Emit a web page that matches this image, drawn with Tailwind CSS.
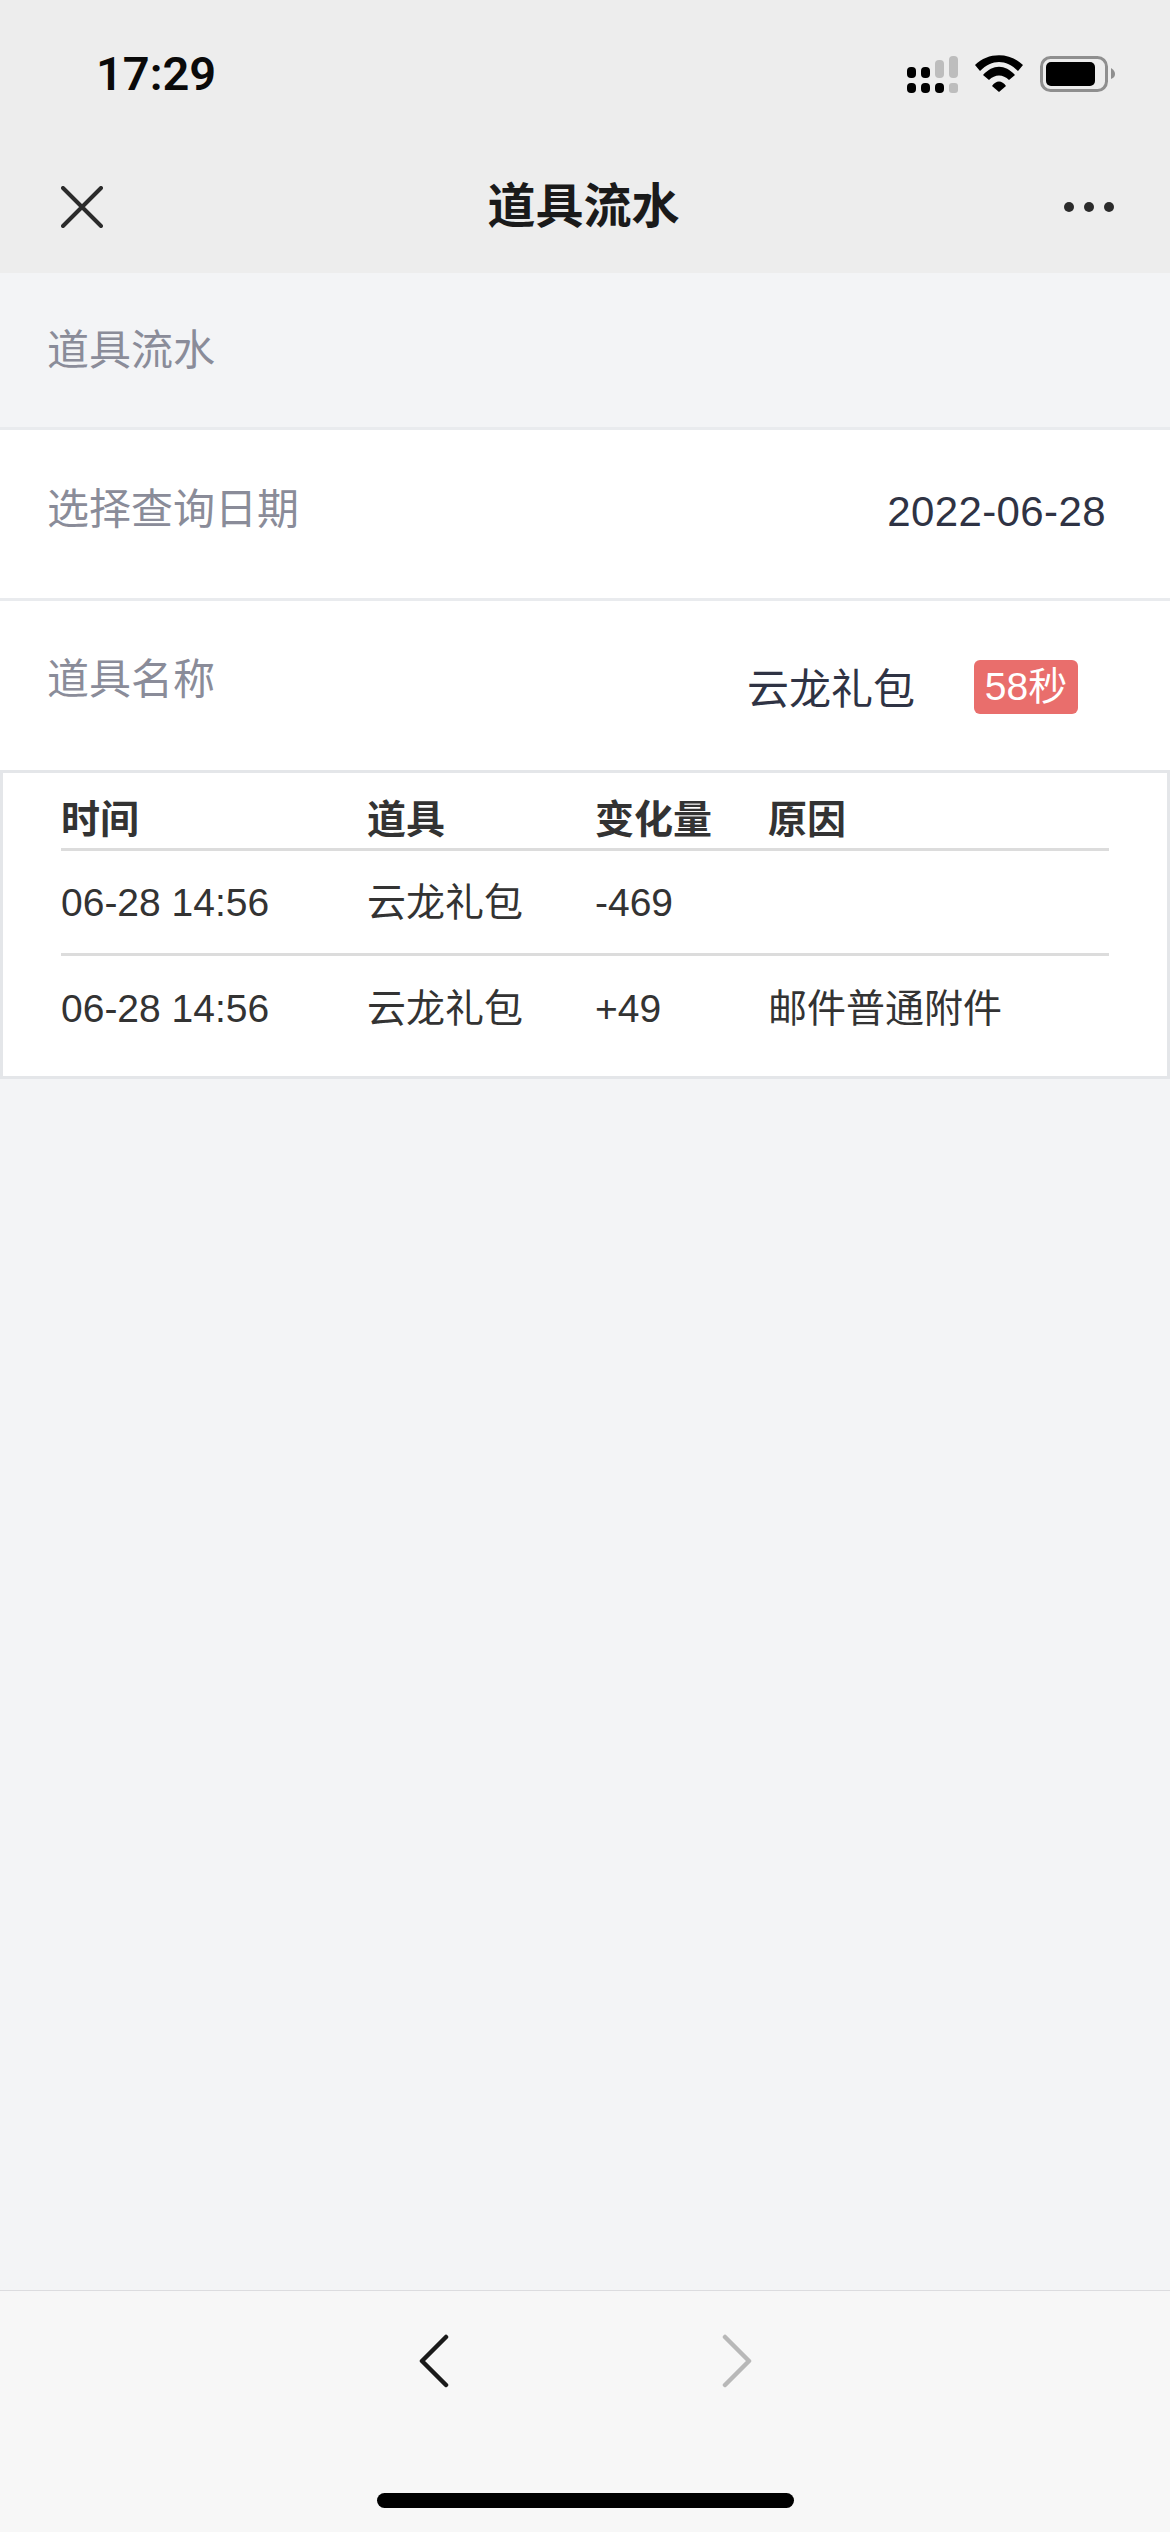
<!DOCTYPE html>
<html lang="zh-CN">
<head>
    <meta charset="UTF-8">
    <meta name="viewport" content="width=device-width, initial-scale=1.0">
    <title>道具流水</title>
    <script src="https://cdn.jsdelivr.net/npm/@tailwindcss/browser@4"></script>
</head>
<body class="flex flex-col h-[2532px] w-[1170px] overflow-hidden bg-[#f3f4f6] font-['Liberation_Sans','Noto_Sans_CJK_SC',sans-serif]">
    <header class="bg-[#ededed] h-[273px] shrink-0">
        <div class="h-[148px] flex items-center justify-between pl-[96px] pr-[55px]">
            <span class="text-[47px] font-semibold text-[#0a0a0a] font-['Roboto',sans-serif]">17:29</span>
            <svg width="208" height="38" viewBox="907 55 208 38">
                <g fill="#000">
                    <rect x="907" y="67" width="9" height="11" rx="4"/>
                    <rect x="921" y="67" width="9" height="11" rx="4"/>
                    <rect x="907" y="83" width="9" height="10" rx="4"/>
                    <rect x="921" y="83" width="9" height="10" rx="4"/>
                    <rect x="935" y="83" width="9" height="10" rx="4"/>
                </g>
                <g fill="#bdbdbd">
                    <rect x="935" y="60" width="9" height="18" rx="4"/>
                    <rect x="949" y="56" width="9" height="22" rx="4"/>
                    <rect x="949" y="83" width="9" height="10" rx="3"/>
                </g>
                <path d="M975 65 C988 52 1010 52 1023 65 L1018 71 C1006 59 992 59 980 71 Z" fill="#000"/>
                <path d="M983 75 C993 64 1005 64 1015 75 L1009 80 C1003 74 995 74 989 80 Z" fill="#000"/>
                <path d="M992 86 C996 80 1002 80 1006 86 L999 92 Z" fill="#000"/>
                <rect x="1041.5" y="57.5" width="65" height="33" rx="9" fill="none" stroke="#8f8f8f" stroke-width="3"/>
                <rect x="1046" y="62" width="49" height="24" rx="5" fill="#000"/>
                <path d="M1111 68 C1114 70 1115 72 1115 74 C1115 76 1114 78 1111 79 Z" fill="#8f8f8f"/>
            </svg>
        </div>
        <nav class="h-[125px] pb-[7px] flex items-center justify-between pl-[61px] pr-[56px]">
            <svg width="42" height="42" viewBox="0 0 42 42" fill="none" stroke="#2b2b2b" stroke-width="4" stroke-linecap="round">
                <path d="M2 2 L40 40 M40 2 L2 40"/>
            </svg>
            <h1 class="text-[48px] font-bold text-[#1a1a1a] leading-none">道具流水</h1>
            <div class="flex gap-[10px]">
                <span class="w-[10px] h-[10px] rounded-full bg-[#2b2b2b]"></span>
                <span class="w-[10px] h-[10px] rounded-full bg-[#2b2b2b]"></span>
                <span class="w-[10px] h-[10px] rounded-full bg-[#2b2b2b]"></span>
            </div>
        </nav>
    </header>

    <main class="flex-1 flex flex-col">
        <div class="h-[157px] flex items-center px-[47px] border-b-[3px] border-[#e9ebee] text-[42px] text-[#8a8c99]">道具流水</div>

        <div class="h-[171px] bg-white border-b-[3px] border-[#e9ebee] flex justify-between pl-[47px] pr-[64px] pt-[50px]">
            <span class="text-[42px] leading-[60px] text-[#8a8c99]">选择查询日期</span>
            <span class="text-[42px] leading-[60px] mt-[2px] tracking-[0.4px] text-[#2f3344]">2022-06-28</span>
        </div>

        <div class="h-[172px] bg-white border-b-[3px] border-[#e4e6e9] flex justify-between pl-[47px] pr-[92px] pt-[49px]">
            <span class="text-[42px] leading-[60px] text-[#8a8c99]">道具名称</span>
            <div class="flex items-start mt-[10px]">
                <span class="text-[42px] leading-[60px] text-[#2f3344]">云龙礼包</span>
                <span class="ml-[59px] w-[104px] h-[54px] rounded-[6px] bg-[#e96e6c] text-white text-[39px] leading-[54px] text-center">58秒</span>
            </div>
        </div>

        <section class="bg-white h-[306px] border-x-[3px] border-b-[3px] border-[#e4e6e9] px-[58px] text-[39px] text-[#333]">
            <div class="grid grid-cols-[306px_228px_173px_1fr] h-[78px] pt-[18px] items-center font-bold border-b-[3px] border-[#dcdcdc]">
                <span>时间</span><span>道具</span><span>变化量</span><span>原因</span>
            </div>
            <div class="grid grid-cols-[306px_228px_173px_1fr] h-[105px] pt-[3px] items-center border-b-[3px] border-[#dcdcdc]">
                <span>06-28 14:56</span><span>云龙礼包</span><span>-469</span><span></span>
            </div>
            <div class="grid grid-cols-[306px_228px_173px_1fr] h-[104px] pt-[2px] items-center">
                <span>06-28 14:56</span><span>云龙礼包</span><span>+49</span><span>邮件普通附件</span>
            </div>
        </section>
    </main>

    <footer class="h-[242px] shrink-0 bg-[#f7f7f7] border-t border-[#dcdcdf] flex flex-col items-center pt-[43px]">
        <div class="flex gap-[273px]">
            <svg width="30" height="54" viewBox="0 0 30 54" fill="none" stroke="#1a1a1a" stroke-width="4.5" stroke-linecap="round" stroke-linejoin="round">
                <path d="M27 3 L3 27 L27 51"/>
            </svg>
            <svg width="30" height="54" viewBox="0 0 30 54" fill="none" stroke="#b8b8b8" stroke-width="4.5" stroke-linecap="round" stroke-linejoin="round">
                <path d="M3 3 L27 27 L3 51"/>
            </svg>
        </div>
        <div class="w-[417px] h-[15px] mt-[105px] rounded-full bg-black"></div>
    </footer>
</body>
</html>
